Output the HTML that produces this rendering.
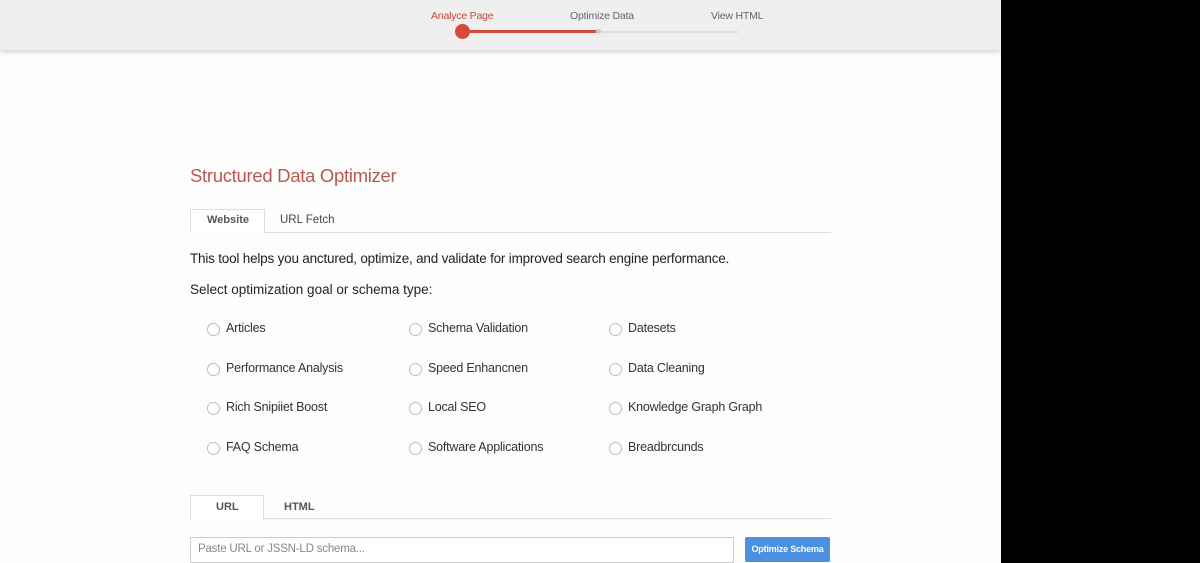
<!DOCTYPE html><html><head><style>
body{margin:0;width:1200px;height:563px;background:#000;font-family:"Liberation Sans",sans-serif;position:relative;overflow:hidden}
#pg{position:absolute;left:0;top:0;width:1001px;height:563px;background:#fdfdfd}
#hd{position:absolute;left:0;top:0;width:1001px;height:50px;background:#efefef;box-shadow:0 2px 5px rgba(0,0,0,.18)}
.a{position:absolute;font-size:10.5px;color:#666;white-space:nowrap;letter-spacing:-0.2px}
.t{position:absolute;white-space:nowrap;color:#222}
.r{position:absolute;width:11px;height:11px;border:1px solid #bbb;border-radius:50%;background:#fff}
.o{position:absolute;font-size:12.5px;color:#333;white-space:nowrap;letter-spacing:-0.2px}
</style></head><body><div id="pg">
<div id="hd">
<div class="a" style="left:431px;top:10px;color:#c4473c">Analyce Page</div>
<div class="a" style="left:570px;top:10px">Optimize Data</div>
<div class="a" style="left:711px;top:10px">View HTML</div>
<div style="position:absolute;left:462px;top:31px;width:276px;height:2px;background:#ddd"></div>
<div style="position:absolute;left:462px;top:30px;width:136px;height:3px;background:#d24a3c"></div>
<div style="position:absolute;left:596px;top:29px;width:5px;height:5px;border-radius:50%;background:#ccc"></div>
<div style="position:absolute;left:455px;top:24px;width:15px;height:15px;border-radius:50%;background:#d8493a"></div>
</div>
<div class="t" style="left:190px;top:165px;font-size:18.5px;color:#b95850;letter-spacing:-0.3px">Structured Data Optimizer</div>
<div style="position:absolute;left:190px;top:232px;width:641px;height:1px;background:#ddd"></div>
<div style="position:absolute;left:190px;top:209px;width:73px;height:23px;border:1px solid #ddd;border-bottom:none;background:#fff"></div>
<div class="t" style="left:207px;top:214px;font-size:11px;font-weight:bold;color:#555">Website</div>
<div class="t" style="left:280px;top:214px;font-size:11.5px;color:#444">URL Fetch</div>
<div class="t" style="left:190px;top:251px;font-size:13.5px;letter-spacing:-0.2px">This tool helps you anctured, optimize, and validate for improved search engine performance.</div>
<div class="t" style="left:190px;top:282px;font-size:13.5px">Select optimization goal or schema type:</div>

<div class="r" style="left:207px;top:323px"></div><div class="o" style="left:226px;top:321px">Articles</div>
<div class="r" style="left:409px;top:323px"></div><div class="o" style="left:428px;top:321px">Schema Validation</div>
<div class="r" style="left:609px;top:323px"></div><div class="o" style="left:628px;top:321px">Datesets</div>
<div class="r" style="left:207px;top:363px"></div><div class="o" style="left:226px;top:361px">Performance Analysis</div>
<div class="r" style="left:409px;top:363px"></div><div class="o" style="left:428px;top:361px">Speed Enhancnen</div>
<div class="r" style="left:609px;top:363px"></div><div class="o" style="left:628px;top:361px">Data Cleaning</div>
<div class="r" style="left:207px;top:402px"></div><div class="o" style="left:226px;top:400px">Rich Snipiiet Boost</div>
<div class="r" style="left:409px;top:402px"></div><div class="o" style="left:428px;top:400px">Local SEO</div>
<div class="r" style="left:609px;top:402px"></div><div class="o" style="left:628px;top:400px">Knowledge Graph Graph</div>
<div class="r" style="left:207px;top:442px"></div><div class="o" style="left:226px;top:440px">FAQ Schema</div>
<div class="r" style="left:409px;top:442px"></div><div class="o" style="left:428px;top:440px">Software Applications</div>
<div class="r" style="left:609px;top:442px"></div><div class="o" style="left:628px;top:440px">Breadbrcunds</div>

<div style="position:absolute;left:190px;top:518px;width:641px;height:1px;background:#ddd"></div>
<div style="position:absolute;left:190px;top:495px;width:72px;height:24px;border:1px solid #ddd;border-bottom:none;background:#fff"></div>
<div class="t" style="left:216px;top:501px;font-size:11px;font-weight:bold;color:#555">URL</div>
<div class="t" style="left:284px;top:501px;font-size:11px;font-weight:bold;color:#555">HTML</div>
<div style="position:absolute;left:190px;top:537px;width:542px;height:24px;border:1px solid #ccc;background:#fff"></div>
<div class="t" style="left:198px;top:543px;font-size:11.5px;color:#888;letter-spacing:-0.2px">Paste URL or JSSN-LD schema...</div>
<div style="position:absolute;left:745px;top:537px;width:85px;height:25px;background:#4a8fe0;border-radius:2px;color:#fff;font-size:9px;font-weight:bold;text-align:center;line-height:25px;letter-spacing:-0.2px">Optimize Schema</div>
</div></body></html>
